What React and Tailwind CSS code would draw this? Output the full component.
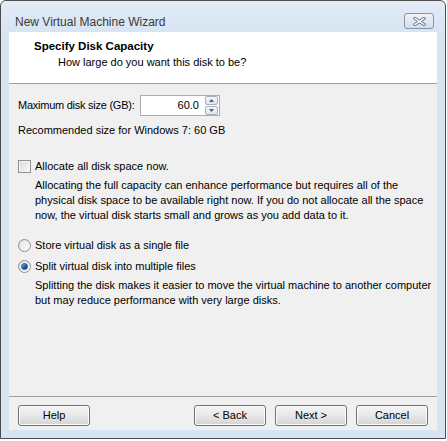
import React from 'react';

const font = { fontFamily: '"Liberation Sans", Arial, sans-serif' };

function Radio({ checked }) {
  return (
    <span className="relative w-[13px] h-[13px] rounded-full border border-[#8e8f8f] bg-gradient-to-br from-[#dcdcdc] to-[#fbfbfb] flex items-center justify-center shrink-0">
      <span className="w-[9px] h-[9px] rounded-full bg-gradient-to-br from-[#e8e8e8] to-[#f7f7f7] flex items-center justify-center">
        {checked && <span className="w-[7px] h-[7px] rounded-full bg-gradient-to-br from-[#8fc7f2] via-[#1c62b9] to-[#0a3a7a] border border-[#2a4f7f]" />}
      </span>
    </span>
  );
}

function Button({ children }) {
  return (
    <button className="w-[72px] h-[21px] rounded-[3px] border border-[#707070] bg-gradient-to-b from-[#f4f4f4] via-[#e8e8e8] to-[#d4d4d4] text-[11px] text-black shadow-[inset_0_0_0_1px_#fcfcfc] flex items-center justify-center">
      {children}
    </button>
  );
}

export default function App() {
  return (
    <div className="w-[447px] h-[441px] bg-white" style={font}>
      <div className="w-[446px] h-[439px] border border-[#4b4b4b] rounded-t-[6px] bg-[#d7e4f2] flex flex-col">
        {/* title bar */}
        <div className="h-[31px] flex items-end justify-between pl-[14px] pr-[11px] pb-[3px] bg-gradient-to-b from-[#e3ecf7] to-[#d7e4f2] rounded-t-[6px]">
          <span className="text-[12px] leading-[16px] text-[#3a3a3a] mb-[-1px]">New Virtual Machine Wizard</span>
          <span className="w-[30px] h-[16px] rounded-[3px] border border-[#8394ad] bg-gradient-to-b from-[#edf2f9] to-[#d3deeb] flex items-center justify-center">
            <svg width="13" height="9" viewBox="0 0 13 9">
              <path d="M2 1.5 L11 7.5 M11 1.5 L2 7.5" stroke="#6a7585" strokeWidth="3.2" strokeLinecap="square" />
              <path d="M2 1.5 L11 7.5 M11 1.5 L2 7.5" stroke="#ffffff" strokeWidth="1.4" strokeLinecap="square" />
            </svg>
          </span>
        </div>

        {/* client area */}
        <div className="flex-1 mx-[8px] mb-[8px] flex flex-col bg-[#f0f0f0] text-[11px] text-black whitespace-nowrap">
          <div className="h-[52px] bg-white border-b border-[#a0a0a0] pt-[7px]">
            <div className="pl-[25px] font-bold leading-[15px] text-[11.5px]">Specify Disk Capacity</div>
            <div className="pl-[49px] mt-[1px] leading-[15px]">How large do you want this disk to be?</div>
          </div>

          <div className="flex-1 flex flex-col px-[9px] pt-[11px]">
            <div className="h-[21px] flex items-center">
              <span className="w-[122px] shrink-0 tracking-[-0.25px]">Maximum disk size (GB):</span>
              <div className="w-[80px] h-[21px] border border-[#abadb3] bg-white flex items-center">
                <span className="flex-1 text-right pr-[6px]">60.0</span>
                <div className="w-[13px] h-[19px] flex flex-col gap-[1px] mr-[1px]">
                  <span className="flex-1 border border-[#a7b1bd] rounded-[2px] bg-gradient-to-b from-[#f5f7fa] to-[#dde4ec] flex items-center justify-center">
                    <svg width="5" height="3" viewBox="0 0 5 3"><path d="M0 3 L2.5 0 L5 3 Z" fill="#4d6185" /></svg>
                  </span>
                  <span className="flex-1 border border-[#a7b1bd] rounded-[2px] bg-gradient-to-b from-[#f5f7fa] to-[#dde4ec] flex items-center justify-center">
                    <svg width="5" height="3" viewBox="0 0 5 3"><path d="M0 0 L2.5 3 L5 0 Z" fill="#4d6185" /></svg>
                  </span>
                </div>
              </div>
            </div>

            <div className="mt-[7px] leading-[15px]">Recommended size for Windows 7: 60 GB</div>

            <div className="mt-[21px] h-[15px] flex items-center gap-[4px]">
              <span className="w-[13px] h-[13px] border border-[#8e8f8f] bg-white flex items-center justify-center">
                <span className="w-[11px] h-[11px] bg-gradient-to-br from-[#dcdcdc] to-[#f8f8f8] border border-[#f4f4f4]" />
              </span>
              <span>Allocate all disk space now.</span>
            </div>
            <div className="mt-[4px] pl-[17px] leading-[15px]">
              Allocating the full capacity can enhance performance but requires all of the<br />
              physical disk space to be available right now. If you do not allocate all the space<br />
              now, the virtual disk starts small and grows as you add data to it.
            </div>

            <div className="mt-[15px] h-[15px] flex items-center gap-[4px]">
              <Radio />
              <span>Store virtual disk as a single file</span>
            </div>
            <div className="mt-[6px] h-[15px] flex items-center gap-[4px]">
              <Radio checked />
              <span>Split virtual disk into multiple files</span>
            </div>
            <div className="mt-[4px] pl-[17px] leading-[15px]">
              Splitting the disk makes it easier to move the virtual machine to another computer<br />
              but may reduce performance with very large disks.
            </div>
          </div>

          <div className="h-[34px] border-t border-[#a0a0a0] flex items-start pt-[8px] px-[9px]">
            <Button>Help</Button>
            <div className="flex-1" />
            <div className="flex gap-[9px]">
              <Button>&lt; Back</Button>
              <Button>Next &gt;</Button>
              <Button>Cancel</Button>
            </div>
          </div>
        </div>
      </div>
    </div>
  );
}
